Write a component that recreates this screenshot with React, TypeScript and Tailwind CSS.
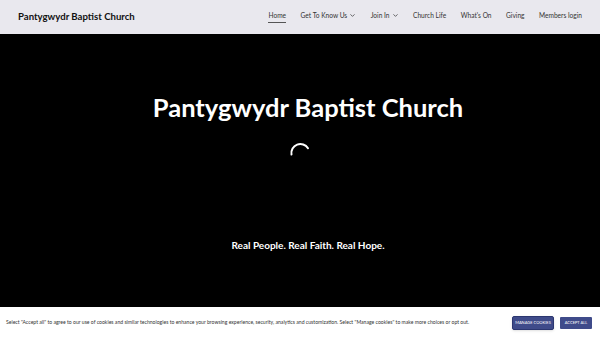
import { ChevronDown } from "lucide-react";

const navItems = [
  { label: "Home", active: true },
  { label: "Get To Know Us", menu: true },
  { label: "Join In", menu: true },
  { label: "Church Life" },
  { label: "What's On" },
  { label: "Giving" },
  { label: "Members login" },
];

export default function App() {
  return (
    <div className="flex h-[338px] w-[600px] flex-col overflow-hidden font-['Lato',sans-serif]">
      <header className="flex h-[34px] shrink-0 items-center justify-between bg-[#e9e8ee] pl-[18px] pr-[18px]">
        <div className="text-[9.6px] font-bold text-[#111]">Pantygwydr Baptist Church</div>
        <nav className="flex items-center gap-[14.5px] text-[6.6px] text-[#333]">
          {navItems.map((item) => (
            <span
              key={item.label}
              className={
                item.active
                  ? "flex items-center border-b border-[#555] pb-[1px]"
                  : "flex items-center pb-[2px]"
              }
            >
              {item.label}
              {item.menu ? <ChevronDown className="ml-[2px] h-[7px] w-[7px]" strokeWidth={2.5} /> : null}
            </span>
          ))}
        </nav>
      </header>
      <main className="flex flex-1 flex-col items-center bg-black text-white">
        <h1 className="mt-[58px] pl-[16px] text-[25.5px] font-bold leading-[30px]">Pantygwydr Baptist Church</h1>
        <svg className="mt-[18px]" width="24" height="24" viewBox="0 0 24 24">
          <path d="M3.5 14.5 A9 9 0 0 1 20 8.2" fill="none" stroke="white" strokeWidth="2" strokeLinecap="round" />
        </svg>
        <p className="mt-[74px] pl-[16px] text-[10px] font-bold">Real People. Real Faith. Real Hope.</p>
      </main>
      <footer className="flex h-[31px] shrink-0 items-center justify-between bg-white pl-[6px] pr-[8px]">
        <p className="text-[5.1px] text-[#333]">
          Select "Accept all" to agree to our use of cookies and similar technologies to enhance your browsing experience, security, analytics and customization. Select "Manage cookies" to make more choices or opt out.
        </p>
        <div className="flex items-center gap-[6px]">
          <button className="h-[14px] w-[42px] rounded-[2px] border border-[#2c3770] bg-[#3f4b8a] text-[4px] uppercase text-white shadow-sm" type="button">
            Manage cookies
          </button>
          <button className="h-[12px] w-[32px] rounded-[1px] bg-[#3f4b8a] text-[4px] uppercase text-white" type="button">
            Accept all
          </button>
        </div>
      </footer>
    </div>
  );
}
